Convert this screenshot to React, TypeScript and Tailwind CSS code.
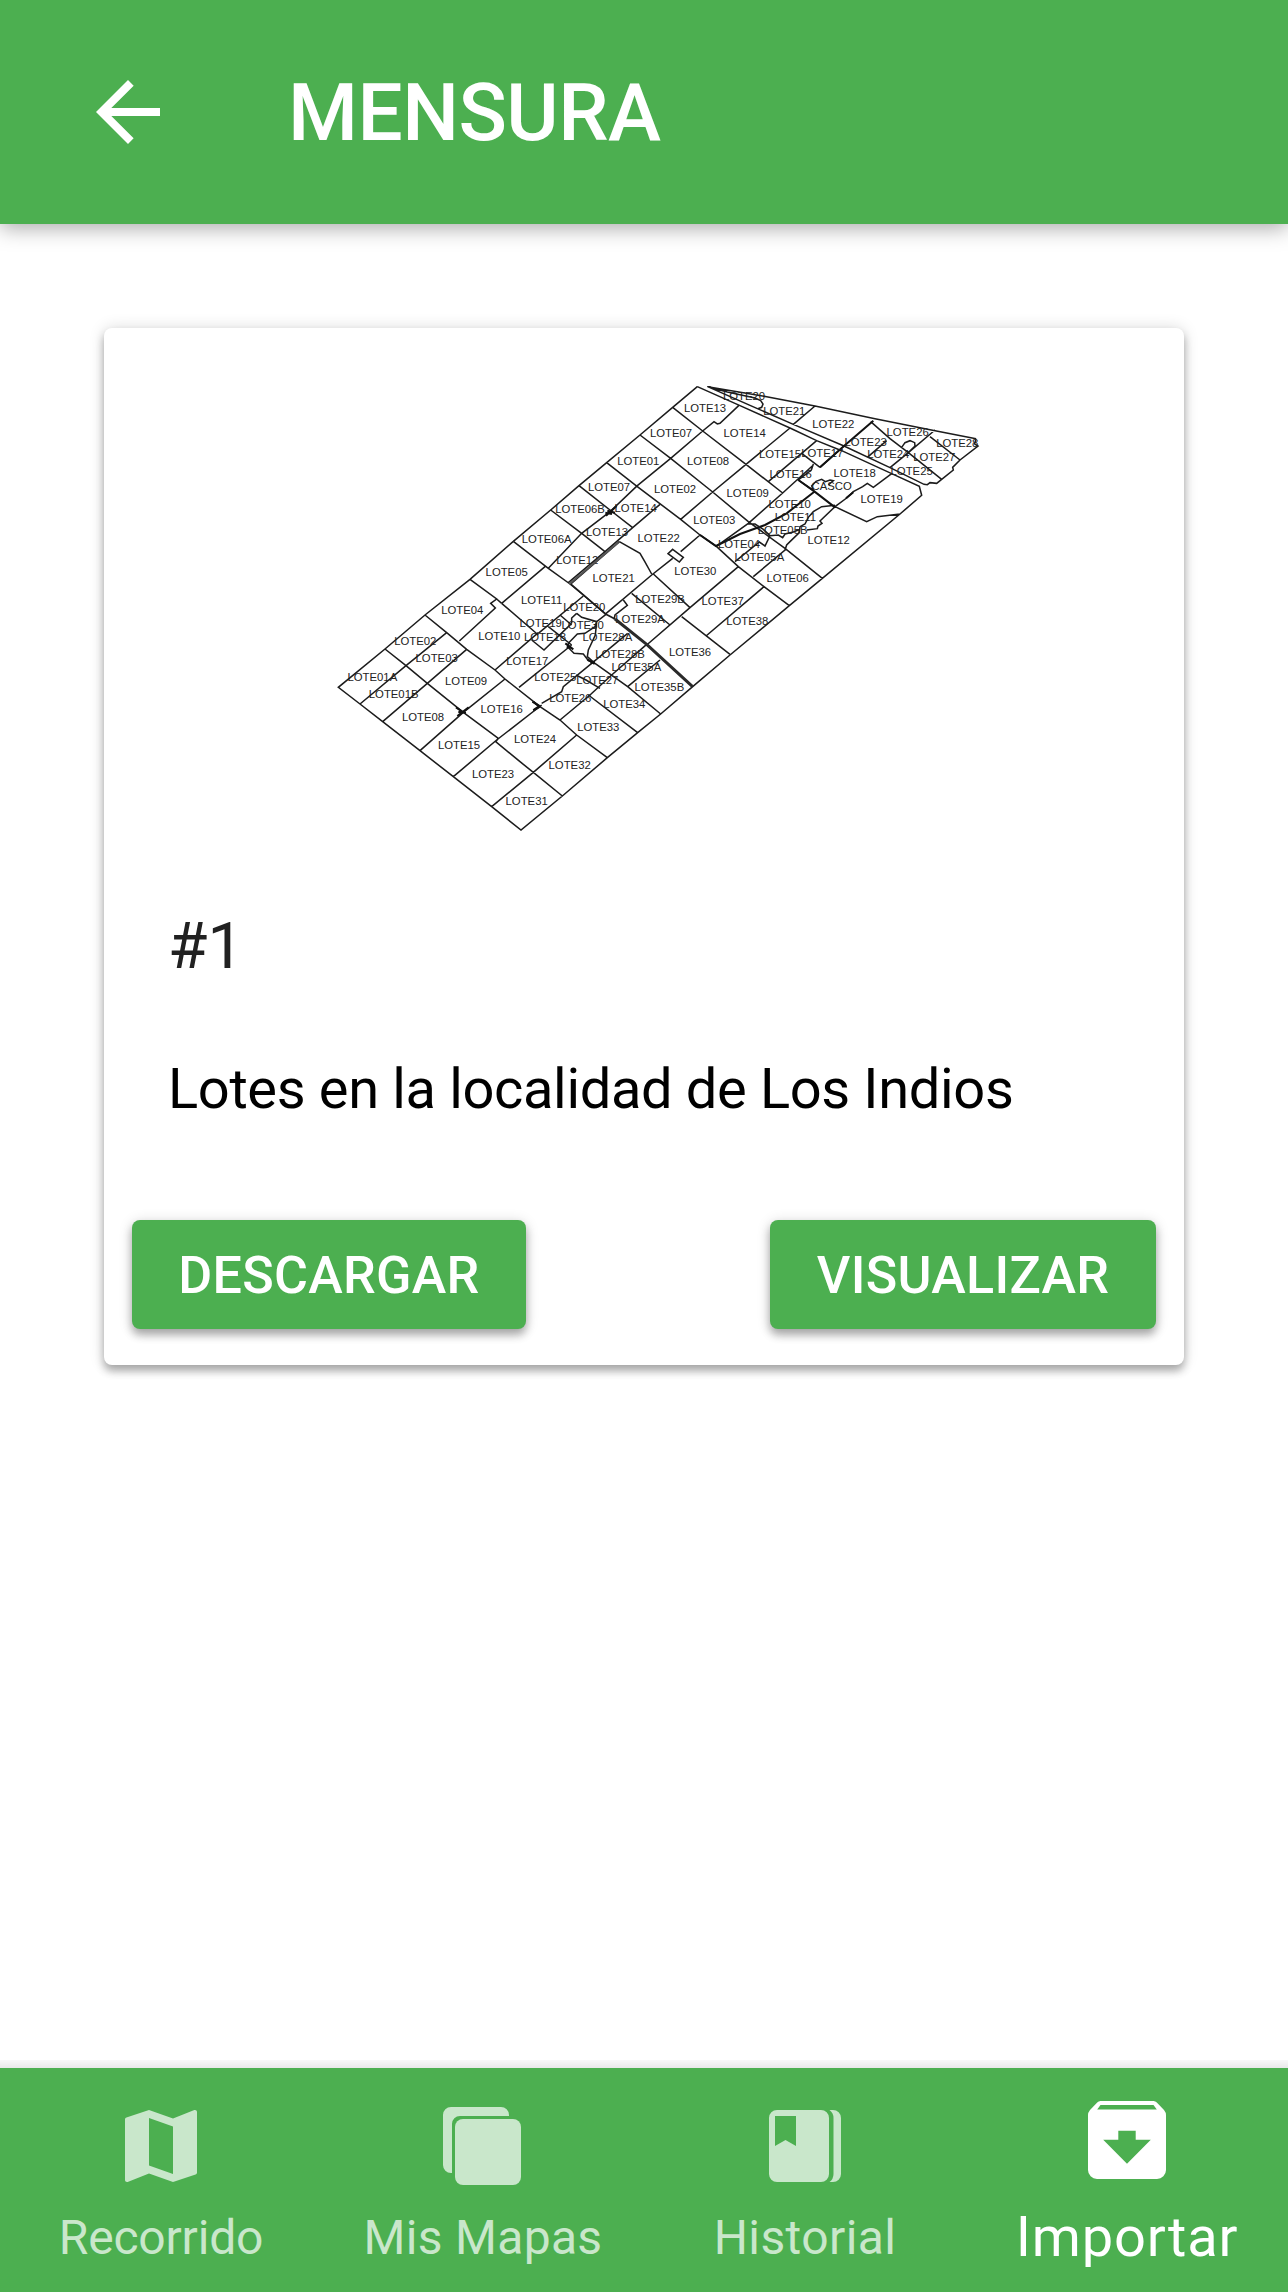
import React from "react";
import { MdArrowBack, MdMap } from "react-icons/md";

type Label = [string, number, number];

// The survey plan is drawn in sheets; each one has its own origin on the plan.
interface Sheet {
  origin: string;
  thin: string;
  thick?: string;
  labels: Label[];
}

const sheets: Sheet[] = [
  {
    origin: "translate(960 0)",
    thin: `M172 50 L98 112 L0 195 L-100 278 L-183 347 L-268 420 L-380 514 M172 50 L300 107 L450 174 L530 212 L605 242 L755 311 L838 349 L845 376 L780 432 L547 625 L448 707 L270 855
      M203 50 L330 106 L460 163 L612 228 L750 293 L852 343 L862 344 L870 338 L890 340 L905 328 L940 300 L938 292 L960 270 L1014 228 L1004 222 L1008 206
      M203 50 L380 80 L525 108 L705 146 L870 179 L1008 206 M203 50 L262 66 L345 84 L362 92 L369 102 L365 112 L352 117
      M525 108 L460 163 M692 155 L750 206 L805 248 L905 328 M885 180 L805 248 L750 293 M785 232 L795 218 L810 212 L824 218 L825 228 L805 248
      M870 200 L960 270 M740 212 L682 262
      M98 112 L188 183 L318 283 L428 369 M296 107 L240 160 L232 162 L222 155 L188 183 L92 265 L-8 347
      M0 195 L92 265 L218 366 L325 455 L435 535 L547 625 M450 174 L318 283 L218 366 L122 448
      M530 212 L385 335 M485 250 L540 292 M520 285 L428 369 L325 460 L232 527
      M540 292 L612 228 M520 282 L514 300 L475 330 L520 362
      M520 360 L515 348 L528 334 L545 328 L556 335 L570 330 L580 332 L565 345
      M585 410 L680 455 L712 440 L780 432 M755 311 L700 352 L682 340 L668 350 L640 365 L620 384 L585 410 L540 453 L546 460 L534 468 L532 476 L500 480
      M585 406 L545 410 L520 425 L505 442 L495 462 L480 470 L478 488 L450 515 L440 525 L435 540 L340 620
      M325 462 L345 462 L370 478 L390 497 L415 495 L428 503 L435 492 L460 486 L480 478 M390 497 L375 528 L358 516 L285 575
      M-100 278 L-8 350 L122 448 L180 495 L230 530 L295 590 L372 650 L448 707
      M180 495 L122 545 M98 538 L130 562 L118 576 L84 551 Z M98 565 L35 615 L-105 733
      M295 590 L150 713 L20 825 M372 650 L198 798`,
    thick: "M700 152 L612 228 L540 292 M475 330 L520 362 L585 412 M180 495 L228 528 L300 492 L375 465 L440 430 L522 366 M640 367 L618 385",
    labels: [
      ["LOTE20", 312, 77], ["LOTE13", 195, 115], ["LOTE21", 433, 122], ["LOTE22", 580, 163],
      ["LOTE26", 803, 185], ["LOTE28", 952, 220], ["LOTE23", 677, 215], ["LOTE27", 883, 260],
      ["LOTE24", 745, 253], ["LOTE25", 815, 302], ["LOTE07", 93, 188], ["LOTE14", 314, 190],
      ["LOTE15", 420, 252], ["LOTE17", 547, 250], ["LOTE16", 452, 312], ["LOTE18", 644, 310],
      ["CASCO", 575, 348], ["LOTE08", 204, 274], ["LOTE02", 105, 358], ["LOTE09", 323, 368],
      ["LOTE19", 725, 387], ["LOTE10", 449, 401], ["LOTE11", 466, 442], ["LOTE03", 223, 451],
      ["LOTE05B", 428, 481], ["LOTE12", 566, 511], ["LOTE04", 297, 522], ["LOTE05A", 358, 562],
      ["LOTE30", 166, 602], ["LOTE06", 443, 624], ["LOTE37", 248, 693], ["LOTE38", 322, 752],
    ],
  },
  {
    origin: "translate(540 0)",
    thin: `M412 347 L330 425 L245 490 L145 595 M237 347 L330 420 L398 473 M152 420 L245 490 L315 545
      M40 514 L145 595 L210 642 L250 675 L318 733 M480 403 L398 473 L315 545 L205 638 M358 515 L210 644
      M358 515 L420 550 L434 574 L455 612 M135 590 L5 700`,
    thick: "M318 437 L350 408 M322 422 L345 428 M316 428 L336 432",
    labels: [
      ["LOTE01", 415, 272], ["LOTE07", 327, 352], ["LOTE06B", 240, 418], ["LOTE14", 407, 415],
      ["LOTE13", 321, 486], ["LOTE06A", 140, 507], ["LOTE22", 476, 503], ["LOTE12", 232, 569],
      ["LOTE21", 341, 623], ["LOTE11", 125, 689], ["LOTE05", 20, 607],
    ],
  },
  {
    origin: "translate(540 330)",
    thin: `M460 282 L570 383 M395 340 L510 435 M370 360 L382 376 L345 405 L342 418 M440 493 L335 585 L270 645 L180 720
      M545 410 L690 523 M480 540 L383 620 M383 460 L275 550 L190 620 L185 635 L125 670
      M318 403 L290 425 L285 440 L255 460 L232 462 L205 490 L206 504 L222 520 L250 522 L265 542 L285 550
      M180 405 L215 435 M215 430 L132 510 L95 480 M145 440 L215 495 M230 400 L215 414 L215 430 M230 400 L245 412 L290 425 L286 465 L265 510 L262 530 L285 550
      M285 550 L383 620 L482 702 M228 585 L258 600 L300 625 M265 645 L413 758 M5 370 L115 465 M57 622 L215 495`,
    thick: "M196 490 L220 508 M200 500 L214 504 M262 538 L284 552 M272 550 L284 544 M97 665 L122 680 M100 692 L120 680",
    labels: [
      ["LOTE29B", 480, 358], ["LOTE20", 253, 380], ["LOTE29A", 420, 418], ["LOTE19", 122, 430],
      ["LOTE30", 248, 434], ["LOTE18", 135, 472], ["LOTE28A", 322, 471], ["LOTE28B", 360, 522],
      ["LOTE36", 570, 517], ["LOTE17", 82, 543], ["LOTE35A", 409, 561], ["LOTE25", 166, 590],
      ["LOTE27", 292, 599], ["LOTE35B", 478, 620], ["LOTE26", 211, 653], ["LOTE34", 373, 672],
    ],
  },
  {
    origin: "translate(0 630)",
    thin: `M580 -116 L450 -2 L315 105 L195 207 L55 322 L120 372 L188 425 L300 512 L400 590 L515 680 L603 750 L727 648 L862 533 L953 458 L1022 402 L1118 320 L1230 225
      M315 105 L380 158 L440 208 L525 270 L555 297 L660 380 L720 420 L770 465 L862 533
      M195 207 L258 257 L322 310 L430 397 L535 475 L527 485 L600 545 L640 577 L727 648
      M380 158 L258 257 L120 372 M440 208 L322 310 L188 425 M555 297 L430 397 L300 512
      M450 -2 L530 57 L512 70 L526 84 L418 183 M530 57 L545 70 M655 158 L525 270 M790 48 L655 160
      M665 375 L530 480 L400 590 M770 465 L640 577 L515 680`,
    thick: "M408 382 L430 397 M412 408 L446 382 M415 396 L438 398 M640 365 L658 380 M640 390 L658 378",
    labels: [
      ["LOTE04", 427, 90], ["LOTE02", 286, 182], ["LOTE03", 350, 234], ["LOTE10", 538, 168],
      ["LOTE01A", 157, 290], ["LOTE01B", 221, 342], ["LOTE09", 438, 302], ["LOTE08", 309, 412],
      ["LOTE16", 545, 386], ["LOTE15", 417, 495], ["LOTE24", 645, 478], ["LOTE33", 835, 440],
      ["LOTE23", 519, 583], ["LOTE32", 749, 555], ["LOTE31", 620, 664],
    ],
  },
];

function SurveyMap() {
  return (
    <svg viewBox="0 0 2040 1440" className="block h-[480px] w-[680px]" fill="none">
      {sheets.map((s) => (
        <g key={s.origin} transform={s.origin}>
          <path d={s.thin} stroke="#1c1c1c" strokeWidth="4.600" />
          {s.thick && <path d={s.thick} stroke="#111" strokeWidth="6" />}
          {s.labels.map(([text, x, y]) => (
            <text
              key={`${text}-${x}`}
              x={x}
              y={y + 12}
              textAnchor="middle"
              fill="#222"
              className="font-['Liberation_Sans',sans-serif] text-[34px]"
            >
              {text}
            </text>
          ))}
        </g>
      ))}
      <path d="M885 747 L980 823 L1117 949" stroke="#2a2a2a" strokeWidth="9" />
      <path d="M858 733 L750 640" stroke="#1c1c1c" strokeWidth="4.600" />
      <path d="M896 517 L748 642" stroke="#555" strokeWidth="6" />
      <path d="M858 733 L885 747" stroke="#1c1c1c" strokeWidth="5" />
    </svg>
  );
}

const PagesIcon = () => (
  <svg viewBox="0 0 96 96" className="size-24" fill="currentColor">
    <path d="M16 9h50a8 8 0 0 1 8 8v1H25a8 8 0 0 0-8 8v49h-1a8 8 0 0 1-8-8V17a8 8 0 0 1 8-8z" />
    <rect x="20" y="21" width="66" height="66" rx="8" />
  </svg>
);

const BookIcon = () => (
  <svg viewBox="0 0 96 96" className="size-24" fill="currentColor" fillRule="evenodd">
    <path d="M20 12h44a8 8 0 0 1 8 8v56a8 8 0 0 1-8 8H20a8 8 0 0 1-8-8V20a8 8 0 0 1 8-8zM18 18v30l10.500-6 10.500 6V18z" />
    <path d="M72.500 12h3.500a8 8 0 0 1 8 8v56a8 8 0 0 1-8 8h-3.500q4-3 4-8V20q0-5-4-8z" />
  </svg>
);

const ImportIcon = () => (
  <svg viewBox="0 0 96 96" className="size-24" fill="currentColor" fillRule="evenodd">
    <path d="M21.500 9h53q2 0 3.300 1.600L85 18Q87 20.500 87 23v55a9 9 0 0 1-9 9H18a9 9 0 0 1-9-9V23q0-2.500 2-5L18.200 10.600Q19.500 9 21.500 9zM21.500 13l-3.300 4.600h59.600L74.500 13zM39.300 38.700v9H24.200L48 71.700l23.800-24H56.700v-9z" />
  </svg>
);

interface TabProps {
  icon: React.ReactNode;
  label: string;
  tracking: string;
  active?: boolean;
}

function Tab({ icon, label, tracking, active }: TabProps) {
  return (
    <button
      className={
        active
          ? "flex flex-1 flex-col items-center pt-6 text-white"
          : "flex flex-1 flex-col items-center pt-[30px] text-[#c9e7cb]"
      }
    >
      {icon}
      <span
        className={`mt-4 ${active ? "text-[56px] leading-[66px]" : "text-[48px] leading-[56px]"} ${tracking}`}
      >
        {label}
      </span>
    </button>
  );
}

function ActionButton({ children, className }: { children: string; className: string }) {
  return (
    <button
      className={`h-[109px] rounded-lg bg-[#4caf50] pt-0.5 text-[52px] leading-none font-medium tracking-[0.3px] text-white shadow-[0_6px_8px_rgba(0,0,0,0.28),0_2px_14px_rgba(0,0,0,0.16)] ${className}`}
    >
      {children}
    </button>
  );
}

export default function App() {
  return (
    <div className="flex h-[2292px] w-[1288px] flex-col bg-white font-['Roboto',sans-serif]">
      <header className="flex h-56 shrink-0 items-center bg-[#4caf50] pl-20 text-white shadow-[0_4px_20px_rgba(0,0,0,0.34)]">
        <MdArrowBack className="size-24" />
        <h1 className="ml-28 pt-0.5 text-[80px] leading-[94px] font-medium tracking-[-0.5px]">MENSURA</h1>
      </header>

      <main className="flex-1 px-[104px] pt-[104px]">
        <article className="flex h-[1037px] flex-col rounded-lg bg-white shadow-[0_6px_8px_rgba(0,0,0,0.3),0_0_16px_rgba(0,0,0,0.14)]">
          <div className="pt-[42px] pl-[216px]">
            <SurveyMap />
          </div>
          <h2 className="mt-[59px] pl-16 text-[64px] leading-[76px] text-[#212121]">#1</h2>
          <p className="mt-[71px] pl-16 text-[56px] leading-[66px] tracking-[-0.35px] text-black">
            Lotes en la localidad de Los Indios
          </p>
          <div className="mt-auto mb-9 flex justify-between px-7">
            <ActionButton className="w-[394px]">DESCARGAR</ActionButton>
            <ActionButton className="w-[386px]">VISUALIZAR</ActionButton>
          </div>
        </article>
      </main>

      <div className="h-2 shrink-0 bg-gradient-to-b from-[#f8f8f8] to-[#e8e8e8]" />
      <nav className="flex h-56 shrink-0 items-start bg-[#4caf50]">
        <Tab icon={<MdMap className="size-24" />} label="Recorrido" tracking="tracking-[-0.200px]" />
        <Tab icon={<PagesIcon />} label="Mis Mapas" tracking="tracking-[0.300px]" />
        <Tab icon={<BookIcon />} label="Historial" tracking="tracking-[0.400px]" />
        <Tab icon={<ImportIcon />} label="Importar" tracking="tracking-[0.850px]" active />
      </nav>
    </div>
  );
}
